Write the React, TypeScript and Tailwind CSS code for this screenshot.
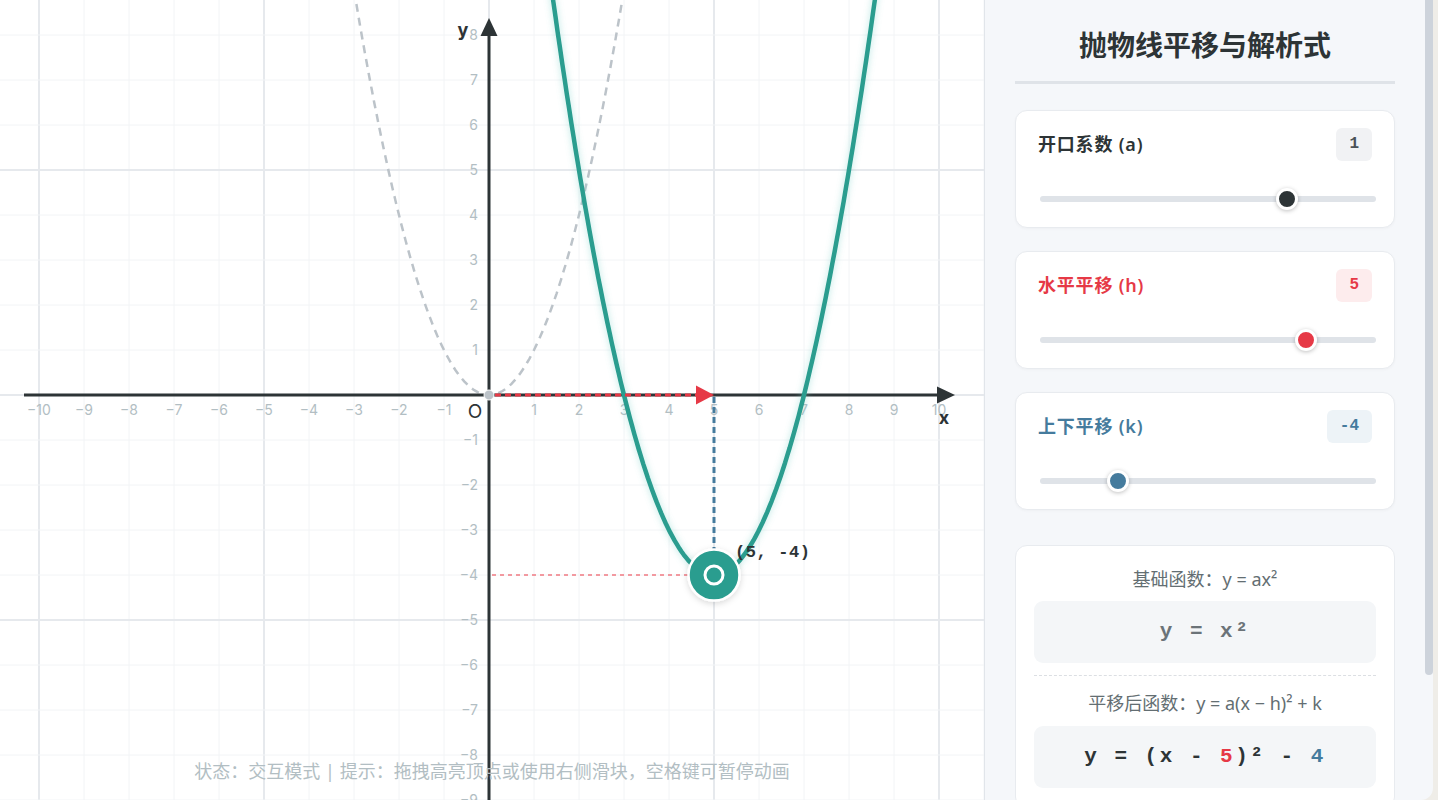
const ORIGIN_X = 489;
const ORIGIN_Y = 395;
const UNIT = 45;

const A = 1;
const H = 5;
const K = -4;

const px = (x: number) => ORIGIN_X + x * UNIT;
const py = (y: number) => ORIGIN_Y - y * UNIT;

function curve(a: number, h: number, k: number, span: number) {
  const pts: string[] = [];
  for (let t = -span; t <= span + 0.001; t += 0.05) {
    const x = h + t;
    pts.push(`${px(x).toFixed(1)},${py(a * t * t + k).toFixed(1)}`);
  }
  return pts.join(' ');
}

const minus = (n: number) => (n < 0 ? `\u2212${Math.abs(n)}` : `${n}`);

function Graph() {
  const xs = Array.from({ length: 22 }, (_, i) => i - 10);
  const ys = Array.from({ length: 18 }, (_, i) => i - 9);
  const vx = px(H);
  const vy = py(K);

  return (
    <svg width="984" height="800" viewBox="0 0 984 800" className="block">
      <defs>
        <filter id="glow" x="-20%" y="-20%" width="140%" height="140%">
          <feGaussianBlur in="SourceGraphic" stdDeviation="3.5" result="blur" />
          <feColorMatrix in="blur" type="matrix" values="0 0 0 0 0.16  0 0 0 0 0.62  0 0 0 0 0.56  0 0 0 0.5 0" result="tint" />
          <feMerge>
            <feMergeNode in="tint" />
            <feMergeNode in="SourceGraphic" />
          </feMerge>
        </filter>
        <filter id="shadow" x="-50%" y="-50%" width="200%" height="200%">
          <feDropShadow dx="0" dy="2" stdDeviation="3" floodColor="#000" floodOpacity="0.15" />
        </filter>
      </defs>

      {/* grid */}
      {xs.map((x) => (
        <line key={`gx${x}`} x1={px(x)} y1={0} x2={px(x)} y2={800} stroke={x % 5 === 0 ? '#e6e9ed' : '#f2f4f6'} strokeWidth={x % 5 === 0 ? 2 : 1} />
      ))}
      {ys.map((y) => (
        <line key={`gy${y}`} x1={0} y1={py(y)} x2={984} y2={py(y)} stroke={y % 5 === 0 ? '#e6e9ed' : '#f2f4f6'} strokeWidth={y % 5 === 0 ? 2 : 1} />
      ))}

      {/* tick labels */}
      <g fill="#b2bec3" fontSize="14" fontFamily="Inter, 'Noto Sans', sans-serif">
        {xs.filter((x) => x !== 0 && x <= 10).map((x) => (
          <text key={`lx${x}`} x={px(x)} y={415} textAnchor="middle">{minus(x)}</text>
        ))}
        {ys.filter((y) => y !== 0).map((y) => (
          <text key={`ly${y}`} x={478} y={py(y) + 5} textAnchor="end">{minus(y)}</text>
        ))}
      </g>

      {/* base parabola */}
      <polyline points={curve(A, 0, 0, 3.1)} fill="none" stroke="#bcc3c9" strokeWidth="2.5" strokeDasharray="8 6" />

      {/* axes */}
      <line x1={24} y1={ORIGIN_Y} x2={940} y2={ORIGIN_Y} stroke="#2d3436" strokeWidth="3" />
      <polygon points="955,395 937,386.5 937,403.5" fill="#2d3436" />
      <line x1={ORIGIN_X} y1={800} x2={ORIGIN_X} y2={30} stroke="#2d3436" strokeWidth="3" />
      <polygon points="489,18 480.5,36 497.5,36" fill="#2d3436" />

      <g fill="#2d3436" fontFamily="Inter, 'Noto Sans', sans-serif">
        <text x={475} y={418} textAnchor="middle" fontSize="19">O</text>
        <text x={463} y={36} textAnchor="middle" fontSize="18" fontWeight="700">y</text>
        <text x={944} y={424} textAnchor="middle" fontSize="18" fontWeight="700">x</text>
      </g>

      {/* k guide */}
      <line x1={ORIGIN_X + 3} y1={vy} x2={vx} y2={vy} stroke="#f07983" strokeWidth="1.5" strokeDasharray="4 4" />

      {/* shifted parabola */}
      <polyline points={curve(A, H, K, 3.72)} fill="none" stroke="#2a9d8f" strokeWidth="4.5" strokeLinejoin="round" filter="url(#glow)" />

      {/* h arrow */}
      <line x1={ORIGIN_X + 6} y1={ORIGIN_Y} x2={vx - 16} y2={ORIGIN_Y} stroke="#e63946" strokeWidth="3" strokeDasharray="6 4" />
      <polygon points={`${vx},395 ${vx - 18},385.5 ${vx - 18},404.5`} fill="#e63946" />

      {/* k drop */}
      <line x1={vx} y1={ORIGIN_Y + 2} x2={vx} y2={vy} stroke="#457b9d" strokeWidth="3" strokeDasharray="6 4" />

      {/* origin */}
      <circle cx={ORIGIN_X} cy={ORIGIN_Y} r="5" fill="#bcc3c9" stroke="#ffffff" strokeWidth="1" />

      {/* vertex */}
      <circle cx={vx} cy={vy} r="25.5" fill="#2a9d8f" stroke="#ffffff" strokeWidth="2.5" filter="url(#shadow)" />
      <circle cx={vx} cy={vy} r="9" fill="#2a9d8f" stroke="#ffffff" strokeWidth="3" />
      <text x={735} y={557} fontSize="17" fontWeight="700" fill="#2d3436" letterSpacing="0.6" fontFamily="'Liberation Mono', 'DejaVu Sans Mono', monospace">
        {`(${H}, ${K})`}
      </text>
    </svg>
  );
}

interface SliderCardProps {
  label: string;
  value: string;
  frac: number;
  labelColor: string;
  badge: string;
  thumb: string;
}

function SliderCard({ label, value, frac, labelColor, badge, thumb }: SliderCardProps) {
  return (
    <div className="rounded-[12px] border border-[#e8ebef] bg-white px-[22px] py-[17px] shadow-[0_1px_3px_rgba(0,0,0,0.03)]">
      <div className="flex h-[33px] items-center justify-between">
        <span className={`text-[18px] font-semibold tracking-[0.8px] ${labelColor}`}>{label}</span>
        <span className={`rounded-[6px] px-[13px] py-[6px] font-['Liberation_Mono',monospace] text-[16px] leading-[21px] font-bold ${badge}`}>
          {value}
        </span>
      </div>
      <div className="relative mt-[27px] ml-[2px] -mr-[4px] h-[22px]">
        <div className="absolute top-[8px] right-0 left-0 h-[6px] rounded-full bg-[#dfe3e8]" />
        <div
          className={`absolute top-0 h-[22px] w-[22px] rounded-full border-[3px] border-white shadow-[0_1px_4px_rgba(0,0,0,0.25)] ${thumb}`}
          style={{ left: `calc(${frac} * (100% - 22px))` }}
        />
      </div>
    </div>
  );
}

function Panel() {
  return (
    <div className="flex h-[800px] w-[449px] shrink-0 overflow-hidden rounded-br-[12px] border-l border-[#e1e5ea] bg-[#f5f7fa]">
      <div className="min-w-0 flex-1 px-[30px] pt-[26px]">
        <div className="border-b-[3px] border-[#dfe3e8] pb-[17px] text-center text-[28px] leading-[38px] font-bold text-[#2d3436]">
          抛物线平移与解析式
        </div>

        <div className="mt-[26px] flex flex-col gap-[23px]">
          <SliderCard label="开口系数 (a)" value="1" frac={(A + 2) / 4} labelColor="text-[#2d3436]" badge="bg-[#f1f2f4] text-[#4b5257]" thumb="bg-[#2d3436]" />
          <SliderCard label="水平平移 (h)" value="5" frac={(H + 8) / 16} labelColor="text-[#e63946]" badge="bg-[#fdeced] text-[#e63946]" thumb="bg-[#e63946]" />
          <SliderCard label="上下平移 (k)" value="-4" frac={(K + 7) / 14} labelColor="text-[#457b9d]" badge="bg-[#edf3f7] text-[#457b9d]" thumb="bg-[#457b9d]" />
        </div>

        <div className="mt-[35px] rounded-[12px] border border-[#e8ebef] bg-white px-[18px] pt-[21px] pb-[20px]">
          <div className="text-center text-[18px] leading-[24px] text-[#636e72]">基础函数：y = ax²</div>
          <div className="mt-[10px] flex h-[62px] items-center justify-center rounded-[9px] bg-[#f4f6f8] font-['Liberation_Mono',monospace] text-[21px] font-bold tracking-[2.5px] whitespace-pre text-[#6b7378]">
            {'y = x²'}
          </div>
          <div className="mt-[12px] border-t border-dashed border-[#dcdfe3]" />
          <div className="mt-[15px] text-center text-[18px] leading-[24px] text-[#636e72]">平移后函数：y = a(x − h)² + k</div>
          <div className="mt-[11px] flex h-[62px] items-center justify-center rounded-[9px] bg-[#f4f6f8] font-['Liberation_Mono',monospace] text-[21px] font-bold tracking-[2.5px] whitespace-pre text-[#2d3436]">
            {'y = (x - '}
            <span className="text-[#e63946]">{H}</span>
            {')² - '}
            <span className="text-[#457b9d]">{Math.abs(K)}</span>
          </div>
        </div>
      </div>
      <div className="w-[8px] shrink-0">
        <div className="h-[675px] w-full rounded-b-full bg-[#cdd3db]" />
      </div>
    </div>
  );
}

export default function App() {
  return (
    <div className="flex h-[800px] w-[1438px] overflow-hidden bg-[#efede8] font-['Noto_Sans','Noto_Sans_CJK_SC',sans-serif]">
      <div className="relative h-[800px] w-[984px] shrink-0 bg-white">
        <Graph />
        <div className="absolute right-0 bottom-[17px] left-0 text-center text-[18px] leading-[24px] text-[#b2bec3]">
          状态：交互模式 | 提示：拖拽高亮顶点或使用右侧滑块，空格键可暂停动画
        </div>
      </div>
      <Panel />
    </div>
  );
}
